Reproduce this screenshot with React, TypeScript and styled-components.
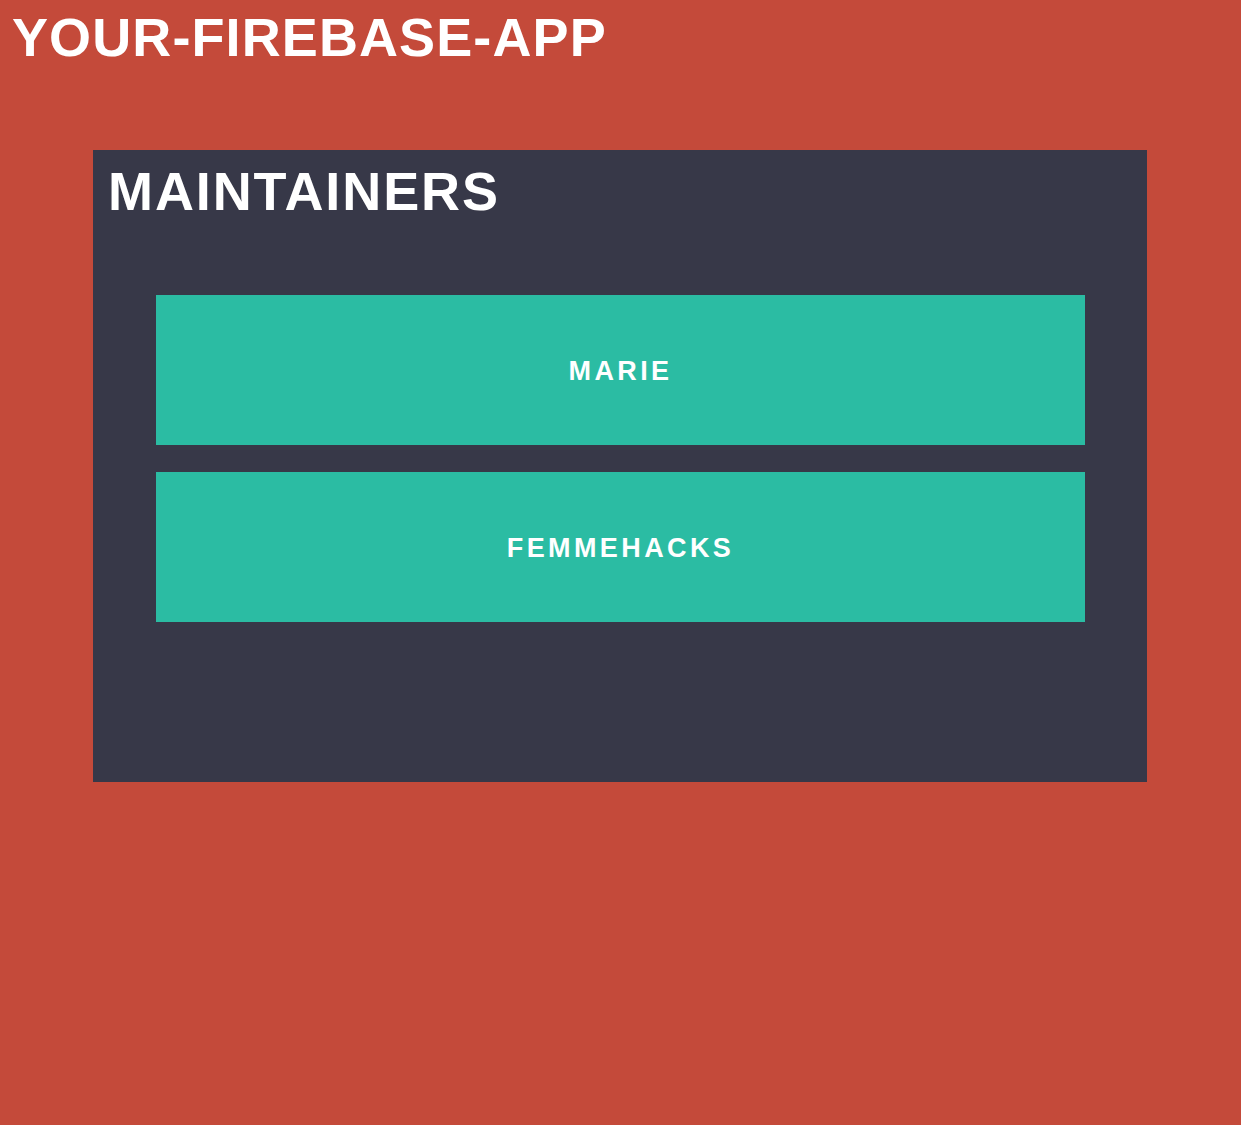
import { FC } from 'react'
import styled, { createGlobalStyle } from 'styled-components'

const GlobalStyle = createGlobalStyle`
  html, body {
    margin: 0;
    padding: 0;
    background: #c44a3a;
  }
  body {
    font-family: "Liberation Sans", Arial, sans-serif;
    color: #ffffff;
  }
`

const Page = styled.div`
  min-height: 1125px;
  background: #c44a3a;
  display: flex;
  flex-direction: column;
`

const AppTitle = styled.h1`
  margin: 10px 0 0 12px;
  font-size: 54px;
  line-height: 54px;
  font-weight: 700;
  letter-spacing: 1.1px;
  text-transform: uppercase;
`

const Panel = styled.section`
  margin: 86px 94px 0 93px;
  padding: 14px 15px 160px;
  background: #373848;
  display: flex;
  flex-direction: column;
`

const PanelTitle = styled.h2`
  margin: 0;
  font-size: 54px;
  line-height: 54px;
  font-weight: 700;
  letter-spacing: 1.9px;
  text-transform: uppercase;
`

const MaintainerList = styled.ul`
  list-style: none;
  margin: 77px 47px 0 48px;
  padding: 0;
  display: flex;
  flex-direction: column;
  gap: 27px;
`

const MaintainerCard = styled.li`
  height: 150px;
  padding-top: 3px;
  box-sizing: border-box;
  background: #2bbca3;
  display: flex;
  align-items: center;
  justify-content: center;
  font-size: 27px;
  font-weight: 700;
  letter-spacing: 3.4px;
  text-transform: uppercase;
`

const maintainers = ['marie', 'femmehacks']

const App: FC = () => {
  return (
    <Page>
      <GlobalStyle />
      <AppTitle>your-firebase-app</AppTitle>
      <Panel>
        <PanelTitle>Maintainers</PanelTitle>
        <MaintainerList>
          {maintainers.map((name) => (
            <MaintainerCard key={name}>{name}</MaintainerCard>
          ))}
        </MaintainerList>
      </Panel>
    </Page>
  )
}

export default App
